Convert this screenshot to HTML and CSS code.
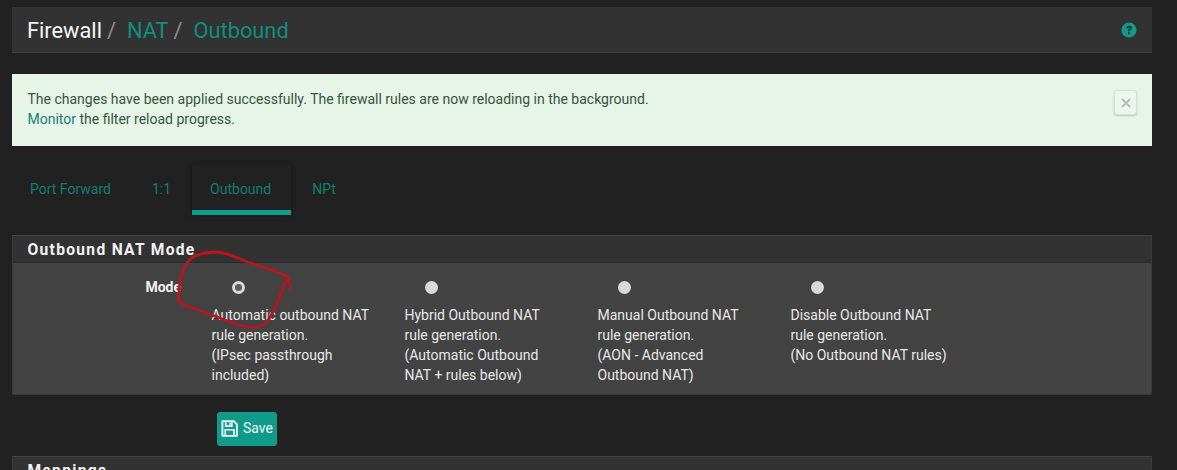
FILE: index.html
```html
<!DOCTYPE html>
<html lang="en">
<head>
<meta charset="utf-8">
<title>Firewall / NAT / Outbound</title>
<link rel="stylesheet" href="styles.css">
</head>
<body>
<div class="page">
  <header class="titlebar">
    <h1 class="crumbs">
      <span class="crumb-root">Firewall</span><span class="sep">/</span><a class="crumb">NAT</a><span class="sep">/</span><a class="crumb">Outbound</a>
    </h1>
    <svg class="help" viewBox="0 0 16 16" aria-hidden="true">
      <circle cx="8" cy="8" r="7.6" fill="#0f9a8a"/>
      <path d="M5.4 6.2c.1-1.6 1.2-2.5 2.7-2.5s2.7.9 2.7 2.2c0 1-.6 1.5-1.3 2-.6.4-.8.7-.8 1.3H7c0-1.1.4-1.7 1.1-2.2.5-.4.8-.6.8-1 0-.4-.3-.7-.8-.7-.6 0-.9.3-1 .9z" fill="#222"/>
      <rect x="7" y="10.3" width="1.9" height="1.9" fill="#222"/>
    </svg>
  </header>

  <div class="alert">
    <p class="alert-text">The changes have been applied successfully. The firewall rules are now reloading in the background.<br><a class="alert-link">Monitor</a> the filter reload progress.</p>
    <button class="alert-close" type="button">
      <svg viewBox="0 0 10 10" aria-hidden="true"><path d="M1 1l8 8M9 1l-8 8" stroke="#b4bdb7" stroke-width="2" fill="none"/></svg>
    </button>
  </div>

  <nav class="tabs">
    <a class="tab">Port Forward</a>
    <a class="tab tab-ratio">1:1</a>
    <a class="tab tab-active">Outbound</a>
    <a class="tab tab-last">NPt</a>
  </nav>

  <section class="panel">
    <h2 class="panel-title">Outbound NAT Mode</h2>
    <div class="panel-body">
      <div class="mode-label">Mode</div>
      <div class="mode-options">
        <label class="option">
          <span class="radio radio-on"></span>
          <span class="option-text">Automatic outbound NAT rule generation.<br>(IPsec passthrough included)</span>
        </label>
        <label class="option">
          <span class="radio"></span>
          <span class="option-text">Hybrid Outbound NAT rule generation.<br>(Automatic Outbound NAT + rules below)</span>
        </label>
        <label class="option">
          <span class="radio"></span>
          <span class="option-text">Manual Outbound NAT rule generation.<br>(AON - Advanced Outbound NAT)</span>
        </label>
        <label class="option">
          <span class="radio"></span>
          <span class="option-text">Disable Outbound NAT rule generation.<br>(No Outbound NAT rules)</span>
        </label>
      </div>
    </div>
  </section>

  <div class="actions">
    <button class="save" type="button">
      <svg class="save-icon" viewBox="0 0 18 18" aria-hidden="true">
        <path d="M1.5 1.2h12l3.3 3.3v12.3H1.5z" fill="none" stroke="#eafaf7" stroke-width="2" stroke-linejoin="round"/>
        <path d="M5 1.5v5h6.5v-5" fill="none" stroke="#eafaf7" stroke-width="1.8"/>
        <rect x="8.6" y="2.6" width="1.6" height="2.6" fill="#eafaf7"/>
        <path d="M4.5 16.5v-6.2h9.2v6.2" fill="none" stroke="#eafaf7" stroke-width="1.8"/>
      </svg>
      <span>Save</span>
    </button>
  </div>

  <section class="panel panel-next">
    <h2 class="panel-title">Mappings</h2>
  </section>
</div>

<svg class="scribble" viewBox="0 0 1177 470" aria-hidden="true">
  <path d="M228 254C218 251 205 252 197 255C190 258 187 262 185 267C181 276 179 284 179 292C178 298 178 301 181 303C185 306 189 307 193 308C201 311 209 314 217 317C225 320 232 323 240 325C247 327 252 328 257 327C262 326 265 324 268 320C272 315 274 309 277 303C280 296 282 290 285 283C286 281 287 279 289 278C281 272 272 270 263 267C255 264 247 262 240 259C232 255 222 252 212 252C207 252 203 253 198 255" fill="none" stroke="#b8161c" stroke-width="2.8" stroke-linecap="round" stroke-linejoin="round"/>
  <path d="M288 277C289 281 290 286 290 290" fill="none" stroke="#b8161c" stroke-width="2.2" stroke-linecap="round"/>
</svg>
</body>
</html>
```
FILE: styles.css
```css
* { box-sizing: border-box; }
html, body { margin: 0; height: 470px; overflow: hidden; }
body {
  position: relative;
  background: #212121;
  font-family: Roboto, "Liberation Sans", sans-serif;
  font-size: 14px;
  line-height: 20px;
  color: #e6e6e6;
}
.page {
  width: 1140px;
  margin-left: 12px;
  padding-top: 7px;
}
a { color: #0f8f80; text-decoration: none; }

.titlebar {
  height: 46px;
  background: #323232;
  border-bottom: 1px solid #3d3d3d;
  padding: 0 15px;
  display: flex;
  align-items: center;
  justify-content: space-between;
}
.crumbs {
  margin: 0;
  padding-top: 2px;
  font-size: 21.8px;
  font-weight: 400;
  line-height: 46px;
  display: flex;
}
.crumb-root { color: #f5f5f5; }
.sep { color: #8f8f8f; margin: 0 11px 0 5px; }
.crumb { color: #0f8f80; }
.help { width: 16px; height: 16px; margin-right: 0; }

.alert {
  margin-top: 21px;
  height: 72px;
  background: #e7f4e8;
  color: #37553f;
  padding: 15px 15px 15px 15.5px;
  display: flex;
  justify-content: space-between;
}
.alert-text { margin: 0; }
.alert-link { color: #167f72; }
.alert-close {
  width: 23px;
  height: 25px;
  margin: 1px 0 0 0;
  padding: 0;
  background: #edf6ee;
  border: 1px solid #d6dfd8;
  border-radius: 3px;
  box-shadow: 0 1px 2px rgba(0, 0, 0, .2);
  display: flex;
  align-items: center;
  justify-content: center;
}
.alert-close svg { width: 10px; height: 10px; }

.tabs {
  margin-top: 19px;
  height: 50px;
  display: flex;
  gap: 4px;
}
.tab {
  height: 50px;
  padding: 14px 18px 0;
  color: #0f7f72;
  white-space: nowrap;
}
.tab-ratio { padding-left: 19px; padding-right: 17px; }
.tab-last { padding-left: 17px; }
.tab-active {
  padding-right: 20px;
  border-bottom: 5px solid #0f9a8a;
  box-shadow: 0 0 5px rgba(0, 0, 0, .35);
}

.panel {
  margin-top: 20px;
  height: 160px;
  background: #434343;
  border: 1px solid #3a3a3a;
  border-top-color: #444;
}
.panel-title {
  margin: 0;
  height: 27px;
  padding: 1px 15px 0 14.5px;
  background: #323232;
  border-bottom: 1px solid #2a2a2a;
  font-size: 15.6px;
  line-height: 27px;
  font-weight: 700;
  letter-spacing: 1.3px;
  color: #f2f2f2;
}
.panel-body {
  display: flex;
  padding-top: 14px;
}
.mode-label {
  width: 168px;
  text-align: right;
  font-weight: 700;
  line-height: 20px;
  color: #f2f2f2;
  flex: none;
}
.mode-options {
  display: flex;
  margin-left: 30.5px;
}
.option {
  width: 193px;
  padding-right: 34px;
  display: flex;
  flex-direction: column;
  align-items: flex-start;
}
.radio {
  width: 13px;
  height: 13px;
  margin: 4px 0 0 20px;
  border-radius: 50%;
  background: #d9d9d9;
  flex: none;
}
.radio-on {
  background: #5a5a5a;
  border: 3.5px solid #d9d9d9;
}
.option-text {
  margin-top: 11px;
  color: #e8e8e8;
}

.actions { padding: 17px 0 0 205px; }
.save {
  width: 60px;
  height: 34px;
  padding: 0 0 2px 4px;
  background: #0f9a8a;
  border: 0;
  border-radius: 3px;
  color: #eafaf7;
  font: 400 14px/20px Roboto, "Liberation Sans", sans-serif;
  display: flex;
  align-items: center;
  gap: 5px;
}
.save-icon { width: 17px; height: 17px; }

.panel-next { margin-top: 10px; height: 40px; }

.scribble {
  position: absolute;
  left: 0;
  top: 0;
  width: 1177px;
  height: 470px;
  pointer-events: none;
}
```
